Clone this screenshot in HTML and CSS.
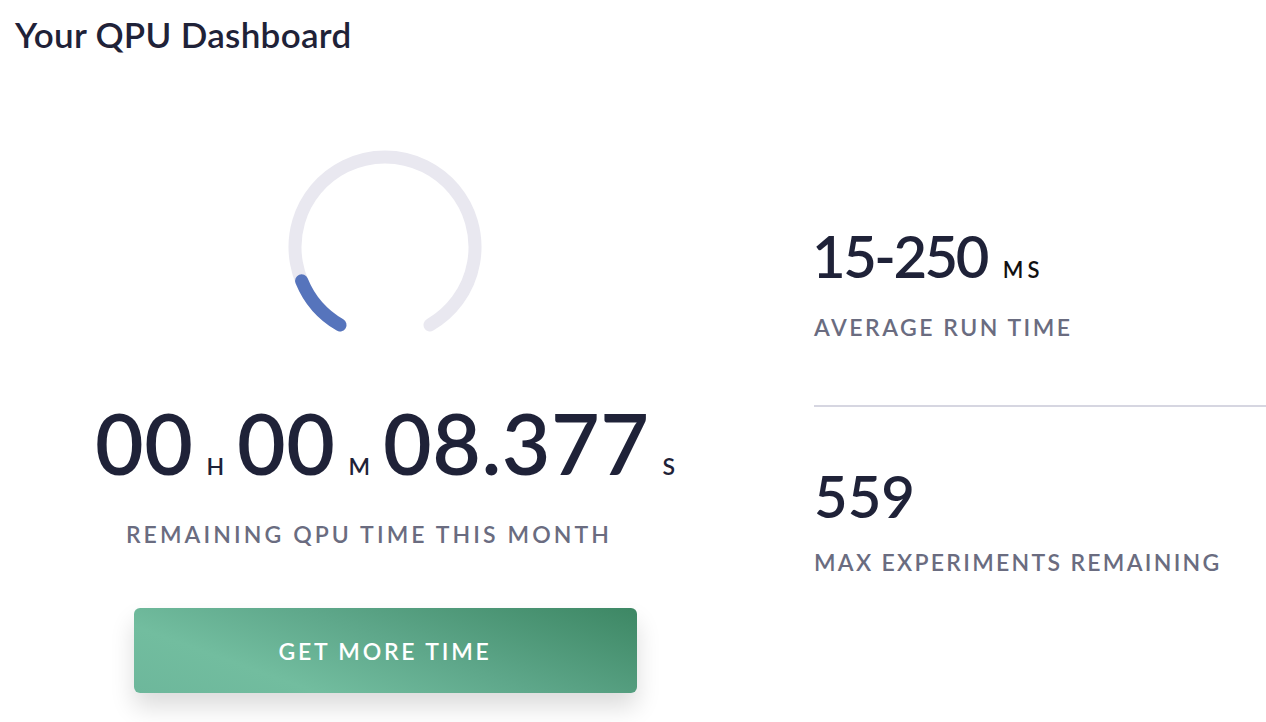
FILE: index.html
```html
<!DOCTYPE html>
<html lang="en">
<head>
<meta charset="utf-8">
<title>Your QPU Dashboard</title>
<link rel="stylesheet" href="styles.css">
</head>
<body>
<h1 class="title">Your QPU Dashboard</h1>
<main class="dash">
  <section class="left">
    <svg class="gauge" width="200" height="200" viewBox="0 0 200 200" aria-hidden="true">
      <path class="track" d="M 55 177.94 A 90 90 0 1 1 145 177.94"/>
      <path class="fill" d="M 55 177.94 A 90 90 0 0 1 16.6 133.7"/>
    </svg>
    <div class="time">
      <span class="num">00</span><span class="unit">H</span>
      <span class="num">00</span><span class="unit">M</span>
      <span class="num">08.377</span><span class="unit unit-last">S</span>
    </div>
    <div class="label label-main">REMAINING QPU TIME THIS MONTH</div>
    <button class="cta">GET MORE TIME</button>
  </section>
  <section class="right">
    <div class="stat stat-run">
      <div class="value value-run">15-250<span class="value-unit">MS</span></div>
      <div class="label">AVERAGE RUN TIME</div>
    </div>
    <hr class="divider">
    <div class="stat stat-exp">
      <div class="value">559</div>
      <div class="label label-exp">MAX EXPERIMENTS REMAINING</div>
    </div>
  </section>
</main>
</body>
</html>
```

FILE: styles.css
```css
* { box-sizing: border-box; }
html, body {
  margin: 0;
  padding: 0;
  background: #ffffff;
}
body {
  font-family: "Lato", "Noto Sans", sans-serif;
  color: #1f2238;
  width: 1266px;
  height: 722px;
  overflow: hidden;
}
.title {
  margin: 0;
  padding: 14px 0 0 15px;
  font-size: 35px;
  line-height: 40px;
  font-weight: 600;
  letter-spacing: 0.3px;
  color: #1f2238;
}
.dash {
  display: flex;
}
.left {
  width: 770px;
  display: flex;
  flex-direction: column;
  align-items: center;
}
.gauge {
  display: block;
  margin-top: 93px;
}
.gauge path {
  fill: none;
  stroke-width: 13;
  stroke-linecap: round;
}
.gauge .track { stroke: #e9e8f0; }
.gauge .fill { stroke: #5674bc; }
.time {
  margin-top: 54px;
  display: flex;
  align-items: baseline;
  line-height: 84px;
  height: 84px;
}
.num {
  font-size: 84px;
  font-weight: 600;
  letter-spacing: 0.5px;
}
.unit {
  font-size: 23px;
  font-weight: 600;
  margin: 0 13px 0 13px;
}
.unit-last {
  margin-right: 0;
}
.label {
  font-size: 23px;
  line-height: 26px;
  font-weight: 600;
  letter-spacing: 2.5px;
  color: #6a6c80;
}
.label-main {
  margin-top: 36px;
  margin-right: 32px;
  letter-spacing: 3.1px;
}
.cta {
  margin-top: 61px;
  width: 503px;
  height: 85px;
  border: none;
  border-radius: 6px;
  background: linear-gradient(200deg, #3d8764 0%, #5ea78a 45%, #72bd9f 75%, #6db79b 100%);
  box-shadow: 0 14px 24px rgba(0, 0, 0, 0.14);
  color: #ffffff;
  font-family: "Lato", "Noto Sans", sans-serif;
  font-size: 23px;
  font-weight: 600;
  letter-spacing: 2.8px;
  cursor: pointer;
}
.right {
  flex: 1;
  padding-left: 44px;
  padding-top: 170px;
}
.value {
  font-size: 58px;
  line-height: 64px;
  font-weight: 600;
  color: #1f2238;
}
.value-run {
  letter-spacing: -2.5px;
  margin-left: -2px;
}
.value-unit {
  font-size: 22px;
  line-height: 1;
  font-weight: 600;
  letter-spacing: 4px;
  color: #111111;
  margin-left: 16px;
}
.stat-run .label {
  margin-top: 26px;
}
.stat-exp .label {
  margin-top: 21px;
  letter-spacing: 2.3px;
}
.divider {
  border: none;
  height: 2px;
  background: #d6d6e1;
  margin: 65px 0 0 0;
}
.stat-exp {
  margin-top: 57px;
}
```
